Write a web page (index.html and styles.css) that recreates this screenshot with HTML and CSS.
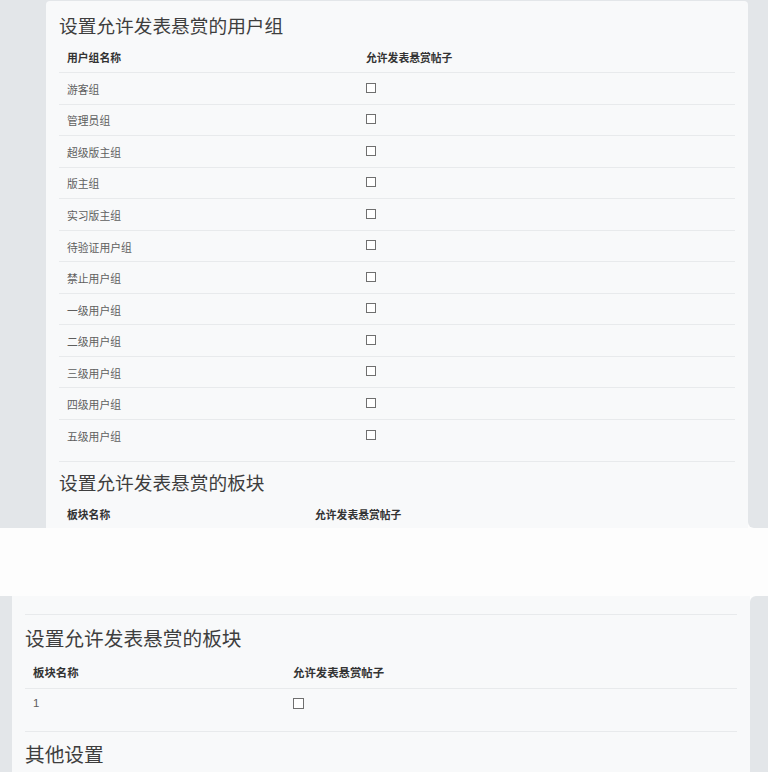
FILE: index.html
```html
<!DOCTYPE html>
<html lang="zh-CN">
<head>
<meta charset="utf-8">
<title>悬赏设置</title>
<link rel="stylesheet" href="styles.css">
</head>
<body>
<div class="shot shot-top">
  <div class="strip strip-left-a"></div>
  <div class="card-col card-col-a">
    <div class="card card-a">
      <h2 class="title">设置允许发表悬赏的用户组</h2>
      <div class="grid grid-groups">
        <div class="head"><span>用户组名称</span><span>允许发表悬赏帖子</span></div>
        <div class="row"><span>游客组</span><span class="cb"></span></div>
        <div class="row"><span>管理员组</span><span class="cb"></span></div>
        <div class="row"><span>超级版主组</span><span class="cb"></span></div>
        <div class="row"><span>版主组</span><span class="cb"></span></div>
        <div class="row"><span>实习版主组</span><span class="cb"></span></div>
        <div class="row"><span>待验证用户组</span><span class="cb"></span></div>
        <div class="row"><span>禁止用户组</span><span class="cb"></span></div>
        <div class="row"><span>一级用户组</span><span class="cb"></span></div>
        <div class="row"><span>二级用户组</span><span class="cb"></span></div>
        <div class="row"><span>三级用户组</span><span class="cb"></span></div>
        <div class="row"><span>四级用户组</span><span class="cb"></span></div>
        <div class="row"><span>五级用户组</span><span class="cb"></span></div>
      </div>
      <hr class="sep">
      <h2 class="title">设置允许发表悬赏的板块</h2>
      <div class="grid grid-forums-a">
        <div class="head"><span>板块名称</span><span>允许发表悬赏帖子</span></div>
      </div>
    </div>
  </div>
  <div class="strip strip-right-a"></div>
</div>

<div class="gap"></div>

<div class="shot shot-bottom">
  <div class="strip strip-left-b"></div>
  <div class="card card-b">
    <hr class="sep sep-b-first">
    <h2 class="title title-b">设置允许发表悬赏的板块</h2>
    <div class="grid grid-forums-b">
      <div class="head head-b"><span>板块名称</span><span>允许发表悬赏帖子</span></div>
      <div class="row row-b"><span class="num">1</span><span class="cb cb-b"></span></div>
    </div>
    <hr class="sep sep-b">
    <h2 class="title title-b">其他设置</h2>
  </div>
  <div class="strip strip-right-b"></div>
</div>
</body>
</html>
```

FILE: styles.css
```css
* { box-sizing: border-box; }

html, body {
  margin: 0;
  padding: 0;
  background: #fdfdfd;
  font-family: "Noto Sans CJK SC", "Noto Sans", sans-serif;
}

.shot {
  display: flex;
  overflow: hidden;
}

.shot-top { height: 528px; }
.shot-bottom { height: 176px; }

.gap { height: 68px; }

.strip { background: #e3e6e9; }

.strip-left-a { flex: 0 0 46px; }
.strip-right-a { flex: 1 1 auto; border-bottom-left-radius: 6px; }
.strip-left-b { flex: 0 0 12px; }
.strip-right-b { flex: 1 1 auto; border-top-left-radius: 6px; }

.card-col-a {
  flex: 0 0 702px;
  background: #e3e6e9;
  padding-top: 1px;
}

.card {
  background: #f8f9fa;
}

.card-a {
  height: 100%;
  border-radius: 4px 4px 0 0;
  padding: 11px 13px 0;
}

.card-b {
  flex: 0 0 738px;
  padding: 0 13px;
}

.title {
  margin: 0;
  font-size: 18.7px;
  line-height: 26px;
  font-weight: 400;
  color: #3e3e3e;
}

.title-b {
  font-size: 19.7px;
  line-height: 27px;
}

.grid { font-size: 10.8px; }

.head, .row {
  display: grid;
  grid-template-columns: 299px 1fr;
  padding: 0 8px;
}

.grid-forums-a .head { grid-template-columns: 248px 1fr; }

.head {
  height: 34px;
  padding-top: 4px;
  align-items: center;
  font-weight: 700;
  color: #333;
}

.row {
  height: 31.55px;
  border-top: 1px solid #e8eaec;
  align-items: center;
  color: #5e5e5e;
  padding-top: 1px;
}

.cb {
  width: 10px;
  height: 10px;
  border: 1px solid #6f6f6f;
  background: #fff;
  align-self: start;
  margin-top: 8.5px;
}

.sep {
  margin: 10px 0 7px;
  border: 0;
  border-top: 1px solid #e8eaec;
  height: 0;
}

.sep-b-first { margin: 18px 0 9px; }
.sep-b { margin: 10px 0 8px; }

.grid-forums-b { font-size: 11.4px; }

.grid-forums-b .head,
.grid-forums-b .row {
  grid-template-columns: 260px 1fr;
}

.head-b {
  height: 36.5px;
  padding-top: 6px;
}

.row-b {
  height: 33px;
  padding-top: 0;
  padding-bottom: 3px;
}

.num {
  font-family: "Liberation Sans", "Noto Sans CJK SC", sans-serif;
}

.cb-b {
  width: 11px;
  height: 11px;
  align-self: center;
  margin-top: 0;
}
```
